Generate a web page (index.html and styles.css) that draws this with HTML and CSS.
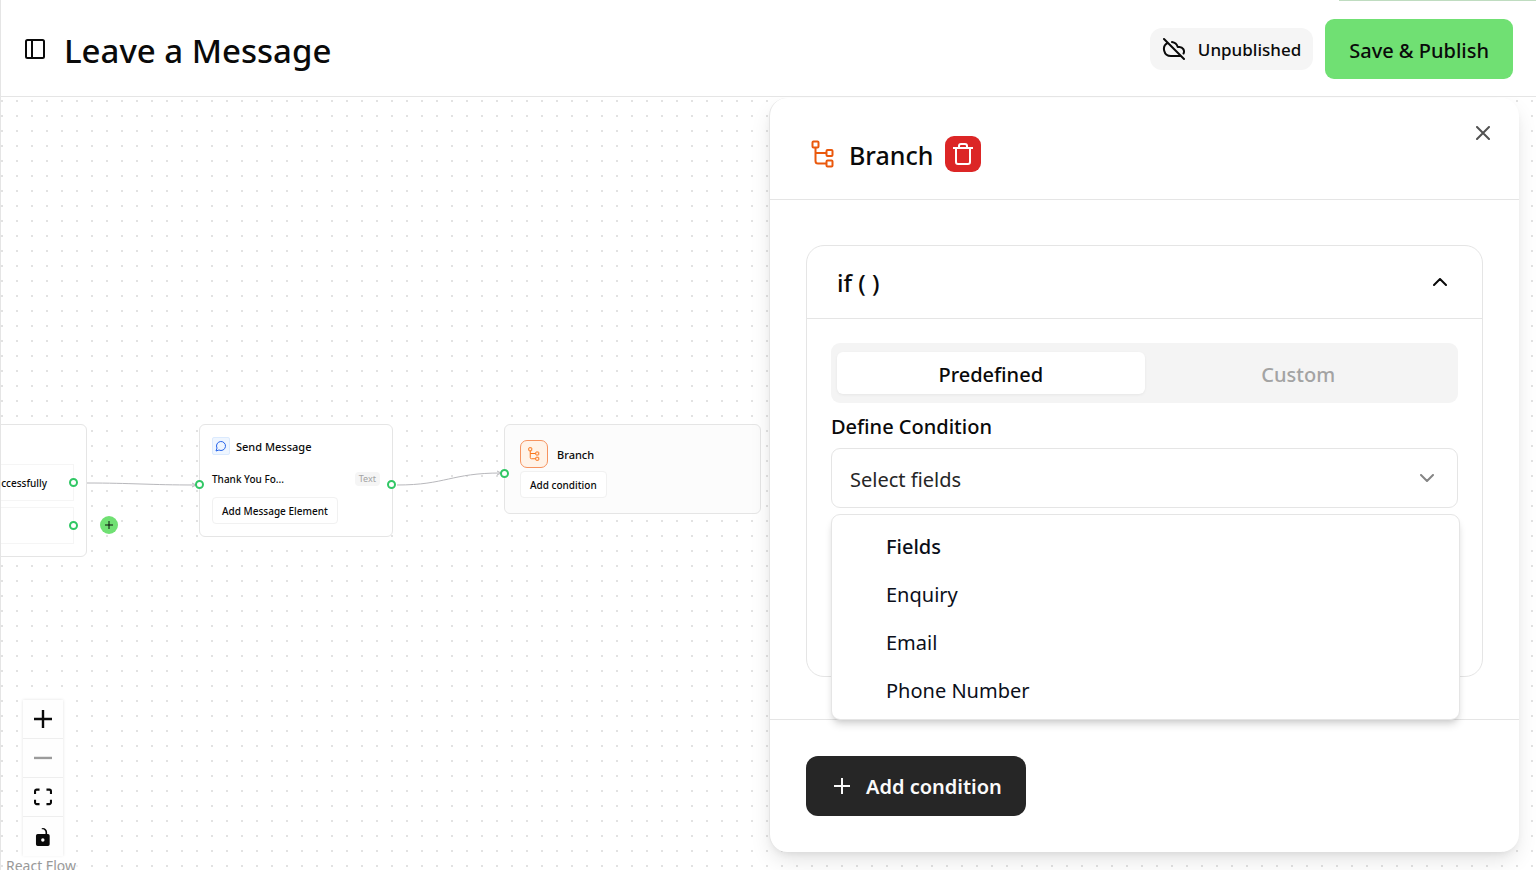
FILE: index.html
```html
<!DOCTYPE html>
<html lang="en">
<head>
<meta charset="utf-8">
<title>Leave a Message</title>
<link rel="stylesheet" href="styles.css">
</head>
<body>
<svg class="defs" aria-hidden="true">
  <symbol id="branch" viewBox="0 0 24 28">
    <path d="M4.500 8v13q0 2.500 2.500 2.500h8M4.500 13h10.500"/>
    <rect x="1.500" y="1.500" width="6" height="6" rx="1"/>
    <rect x="15.500" y="10" width="6" height="6" rx="1"/>
    <rect x="15.500" y="20.500" width="6" height="6" rx="1"/>
  </symbol>
</svg>
<div class="app">
  <header class="topbar">
    <button class="icon-btn" type="button" aria-label="Toggle sidebar">
      <svg class="sidebar-icon" viewBox="0 0 20 20"><rect x="1" y="1" width="18" height="18" rx="1.500"/><path d="M7 1v18"/></svg>
    </button>
    <h1 class="title">Leave a Message</h1>
    <span class="status">
      <svg class="cloud-icon" viewBox="0 0 24 24"><path d="m2 2 20 20M5.782 5.782A7 7 0 0 0 9 19h8.500a4.500 4.500 0 0 0 1.307-.193M21.532 16.500A4.500 4.500 0 0 0 17.500 10h-1.790A7.008 7.008 0 0 0 10 5.070"/></svg>
      Unpublished
    </span>
    <button class="publish" type="button">Save &amp; Publish</button>
    <span class="progress"></span>
  </header>

  <main class="canvas">
    <svg class="edges" aria-hidden="true">
      <path d="M86 386C130 386 150 388 194 388"/>
      <path d="M396 388C445 388 450 376 500 376"/>
      <path d="M191 386l4 2-4 2M496 374l4 2-4 2"/>
    </svg>

    <section class="node node-form">
      <div class="form-row">ccessfully</div>
      <div class="form-row"></div>
      <i class="handle handle-row1"></i>
      <i class="handle handle-row2"></i>
    </section>
    <button class="add-node" type="button" aria-label="Add node"><svg viewBox="0 0 10 10"><path d="M5 1v8M1 5h8"/></svg></button>

    <section class="node node-message">
      <div class="node-head">
        <span class="msg-badge"><svg viewBox="0 0 24 24"><path d="M7.900 20A9 9 0 1 0 4 16.100L2 22Z"/></svg></span>
        <span>Send Message</span>
      </div>
      <div class="message-row"><span>Thank You Fo...</span><span class="tag">Text</span></div>
      <button class="node-btn" type="button">Add Message Element</button>
      <i class="handle handle-in"></i>
      <i class="handle handle-out"></i>
    </section>

    <section class="node node-branch">
      <div class="node-head branch-head">
        <span class="branch-badge"><svg><use href="#branch"/></svg></span>
        <span>Branch</span>
      </div>
      <button class="node-btn" type="button">Add condition</button>
      <i class="handle handle-branch"></i>
    </section>

    <div class="controls">
      <button type="button" aria-label="Zoom in"><svg viewBox="0 0 32 32"><path d="M32 18.133H18.133V32h-4.266V18.133H0v-4.266h13.867V0h4.266v13.867H32z"/></svg></button>
      <button type="button" aria-label="Zoom out" disabled><svg viewBox="0 0 32 32"><path d="M0 13.800h32V18H0z"/></svg></button>
      <button type="button" aria-label="Fit view"><svg viewBox="0 0 32 30"><path d="M3.692 4.630c0-.530.400-.938.939-.938h5.215V0H4.708C2.130 0 0 2.054 0 4.630v5.216h3.692V4.631zM27.354 0h-5.200v3.692h5.170c.530 0 .984.400.984.939v5.215H32V4.631A4.624 4.624 0 0 0 27.354 0zm.954 24.830c0 .532-.400.940-.939.940h-5.215v3.768h5.215c2.577 0 4.631-2.130 4.631-4.707v-5.139h-3.692v5.139zm-23.677.940a.919.919 0 0 1-.939-.940v-5.138H0v5.139c0 2.577 2.130 4.707 4.708 4.707h5.138V25.770H4.631z"/></svg></button>
      <button type="button" aria-label="Toggle interactivity"><svg viewBox="0 0 25 32"><path d="M21.333 10.667H19.810V7.619C19.810 3.429 16.380 0 12.190 0c-4.114 1.828-1.370 2.133.305 2.438 1.676.305 4.420 2.590 4.420 5.181v3.048H3.047A3.056 3.056 0 0 0 0 13.714v15.238A3.056 3.056 0 0 0 3.048 32h18.285a3.056 3.056 0 0 0 3.048-3.048V13.714a3.056 3.056 0 0 0-3.048-3.047zM12.190 24.533a3.056 3.056 0 0 1-3.047-3.047 3.056 3.056 0 0 1 3.047-3.048 3.056 3.056 0 0 1 3.048 3.048 3.056 3.056 0 0 1-3.048 3.047z"/></svg></button>
    </div>
    <a class="attribution" href="#">React Flow</a>

    <aside class="panel">
      <header class="panel-head">
        <svg class="panel-icon"><use href="#branch"/></svg>
        <h2>Branch</h2>
        <button class="delete" type="button" aria-label="Delete"><svg viewBox="0 0 20 22"><path d="M0 5h20M3 5v14q0 2 2 2h10q2 0 2-2V5M6 5V3q0-2 2-2h4q2 0 2 2v2"/></svg></button>
        <button class="close" type="button" aria-label="Close"><svg viewBox="0 0 14 14"><path d="m1 1 12 12M13 1 1 13"/></svg></button>
      </header>
      <div class="panel-body">
        <section class="card">
          <button class="card-head" type="button"><span>if ( )</span><svg class="chevron" viewBox="0 0 14 8"><path d="m1 7 6-6 6 6"/></svg></button>
          <div class="card-body">
            <div class="tabs" role="tablist">
              <button class="tab active" type="button" role="tab" aria-selected="true">Predefined</button>
              <button class="tab" type="button" role="tab" aria-selected="false">Custom</button>
            </div>
            <label class="field-label" for="field">Define Condition</label>
            <div class="select-wrap">
              <select id="field"><option>Select fields</option></select>
              <svg class="chevron select-chevron" viewBox="0 0 14 8"><path d="m1 1 6 6 6-6"/></svg>
              <div class="menu" role="listbox" aria-label="Fields">
                <div class="menu-title">Fields</div>
                <div role="option">Enquiry</div>
                <div role="option">Email</div>
                <div role="option">Phone Number</div>
              </div>
            </div>
          </div>
        </section>
      </div>
      <footer class="panel-foot">
        <button class="add-condition" type="button"><svg viewBox="0 0 16 16"><path d="M8 0v16M0 8h16"/></svg>Add condition</button>
      </footer>
    </aside>
  </main>
</div>
</body>
</html>
```
FILE: styles.css
```css
* { box-sizing: border-box; }
body { margin: 0; font-family: "Segoe UI", "Noto Sans", "Open Sans", sans-serif; color: #0a0a0a; background: #fff; }
button, select { font: inherit; color: inherit; border: 0; background: none; padding: 0; margin: 0; }
h1, h2 { margin: 0; }
svg { display: block; fill: none; stroke: currentColor; }
.defs { position: absolute; width: 0; height: 0; }

.app { height: 100vh; display: flex; flex-direction: column; border-left: 1px solid #e5e5e5; overflow: hidden; }

.topbar { position: relative; height: 97px; flex: none; display: flex; align-items: center; padding: 2px 23px 0 24px; border-bottom: 1px solid #e5e5e5; }
.sidebar-icon { width: 20px; height: 20px; stroke-width: 2; }
.title { margin: 4px auto 0 19px; font-size: 33px; line-height: 44px; font-weight: 500; }
.status { display: flex; align-items: center; gap: 12px; height: 42px; padding: 0 12px; border-radius: 12px; background: #f5f5f5; font-size: 17px; font-weight: 500; }
.cloud-icon { width: 24px; height: 24px; stroke-width: 2; stroke-linecap: round; stroke-linejoin: round; }
.publish { height: 60px; margin-left: 12px; padding: 2px 24px 0; border-radius: 9px; background: #70e073; font-size: 20px; font-weight: 500; }
.progress { position: absolute; top: 0; right: 0; width: 197px; height: 1px; background: #bfdcc0; }

.canvas { position: relative; flex: 1; overflow: hidden; background: radial-gradient(circle at 1px 1px, #e2e2e2 1px, transparent 1px) 0 3px / 15px 15px; }
.edges { position: absolute; inset: 0; width: 100%; height: 100%; stroke: #b8b8bc; }

.node { position: absolute; top: 327px; border: 1px solid #e5e5e5; border-radius: 6px; background: #fff; font-size: 10px; font-weight: 500; }
.node-form { left: -107px; width: 193px; height: 133px; padding: 39px 12px 0; display: flex; flex-direction: column; gap: 6px; }
.form-row { height: 37px; display: flex; align-items: center; justify-content: flex-end; padding-right: 26px; border: 1px solid #f5f5f5; }
.node-message { left: 198px; width: 194px; height: 113px; padding: 12px; }
.node-head { display: flex; align-items: center; gap: 6px; font-size: 11px; }
.msg-badge { width: 18px; height: 18px; display: grid; place-items: center; border: 1px solid #dbeafe; border-radius: 2px; background: #eff6ff; color: #2563eb; }
.msg-badge svg { width: 12px; height: 12px; stroke-width: 2; }
.message-row { display: flex; justify-content: space-between; align-items: center; height: 18px; margin: 15px 0 9px; }
.tag { padding: 0 4px; border-radius: 4px; background: #f5f5f5; color: #a3a3a3; font-size: 9px; line-height: 14px; font-weight: 400; }
.node-btn { height: 27px; padding: 0 9px; border: 1px solid #f1f1f1; border-radius: 4px; background: #fff; }
.node-branch { left: 503px; width: 257px; height: 90px; padding: 15px; background: #fcfcfc; }
.branch-head { gap: 9px; margin-bottom: 3px; }
.branch-badge { width: 28px; height: 28px; display: grid; place-items: center; border: 1px solid #f6935f; border-radius: 7px; background: #fff3e8; color: #f97316; }
.branch-badge svg { width: 12px; height: 14px; stroke-width: 2; }
.handle { position: absolute; width: 9px; height: 9px; border: 2px solid #31c765; border-radius: 50%; background: #fff; }
.handle-row1 { right: 8px; top: 53px; }
.handle-row2 { right: 8px; top: 96px; }
.handle-in { left: -5px; top: 55px; }
.handle-out { right: -4px; top: 55px; }
.handle-branch { left: -5px; top: 44px; }
.add-node { position: absolute; left: 99px; top: 419px; width: 18px; height: 18px; display: grid; place-items: center; border-radius: 50%; background: #70e073; }
.add-node svg { width: 10px; height: 10px; }

.controls { position: absolute; left: 22px; bottom: 14px; width: 40px; display: flex; flex-direction: column; box-shadow: 0 0 3px rgba(0, 0, 0, .12); background: #fefefe; }
.controls button { height: 39px; display: grid; place-items: center; border-bottom: 1px solid #eee; }
.controls button:last-child { border-bottom: 0; }
.controls svg { width: 18px; height: 18px; fill: #0a0a0a; stroke: none; }
.controls button:disabled svg { opacity: .4; }
.attribution { position: absolute; left: 5px; bottom: -6px; padding-right: 2px; font-size: 14px; line-height: 20px; color: #999; background: rgba(255, 255, 255, .5); text-decoration: none; }

.panel { position: absolute; top: 1px; right: 17px; bottom: 18px; width: 49%; max-width: 750px; display: flex; flex-direction: column; border-left: 1px solid #e5e5e5; border-radius: 18px; background: #fff; box-shadow: 0 10px 22px -3px rgba(0, 0, 0, .12), 0 4px 9px -4px rgba(0, 0, 0, .1); }
.panel-head { position: relative; height: 102px; flex: none; display: flex; align-items: center; padding: 10px 41px 0; border-bottom: 1px solid #e5e5e5; }
.panel-icon { width: 24px; height: 28px; color: #ea580c; stroke-width: 2; }
.panel-head h2 { margin: 2px 12px 0 14px; font-size: 25px; line-height: 36px; font-weight: 500; }
.delete { width: 36px; height: 36px; display: grid; place-items: center; border-radius: 9px; background: #dc2626; color: #fff; }
.delete svg { width: 20px; height: 22px; stroke-width: 2; }
.close { position: absolute; right: 27px; top: 26px; width: 18px; height: 18px; display: grid; place-items: center; color: #525252; }
.close svg { width: 14px; height: 14px; stroke-width: 2; stroke-linecap: round; }
.panel-body { flex: 1; padding: 45px 36px 42px; display: flex; flex-direction: column; }
.card { flex: 1; border: 1px solid #e5e5e5; border-radius: 18px; }
.card-head { width: 100%; height: 73px; display: flex; align-items: center; justify-content: space-between; padding: 0 35px 0 30px; border-bottom: 1px solid #e5e5e5; font-size: 24px; font-weight: 500; }
.chevron { width: 14px; height: 8px; stroke-width: 2; stroke-linecap: round; stroke-linejoin: round; }
.card-body { padding: 24px; }
.tabs { height: 60px; display: grid; grid-template-columns: 1fr 1fr; align-items: center; padding: 0 6px; border-radius: 9px; background: #f4f4f4; font-size: 20px; font-weight: 500; }
.tab { height: 42px; padding-top: 2px; border-radius: 6px; color: #a3a3a3; }
.tab.active { background: #fff; color: #0a0a0a; box-shadow: 0 1px 3px rgba(0, 0, 0, .06); }
.field-label { display: block; margin: 9px 0 6px; font-size: 20px; line-height: 30px; font-weight: 500; }
.select-wrap { position: relative; }
select { appearance: none; width: 100%; height: 60px; padding: 2px 18px 0; border: 1px solid #e5e5e5; border-radius: 9px; background: #fff; font-size: 20px; color: #262626; }
.select-chevron { position: absolute; right: 24px; top: 26px; color: #858585; }
.menu { position: absolute; left: 0; right: -2px; top: 66px; padding: 6px 0; border: 1px solid #e5e5e5; border-radius: 9px; background: #fff; box-shadow: 0 6px 9px -2px rgba(0, 0, 0, .16), 0 3px 6px -3px rgba(0, 0, 0, .1); color: #0b0f1a; font-size: 20px; line-height: 48px; }
.menu > div { height: 48px; padding: 2px 54px 0; }
.menu-title { font-weight: 500; }
.panel-foot { flex: none; padding: 36px; border-top: 1px solid #e5e5e5; }
.add-condition { height: 60px; display: flex; align-items: center; gap: 16px; padding: 0 24px 0 28px; border-radius: 12px; background: #262626; color: #fafafa; font-size: 20px; font-weight: 600; }
.add-condition svg { width: 16px; height: 16px; stroke-width: 2; }
```
